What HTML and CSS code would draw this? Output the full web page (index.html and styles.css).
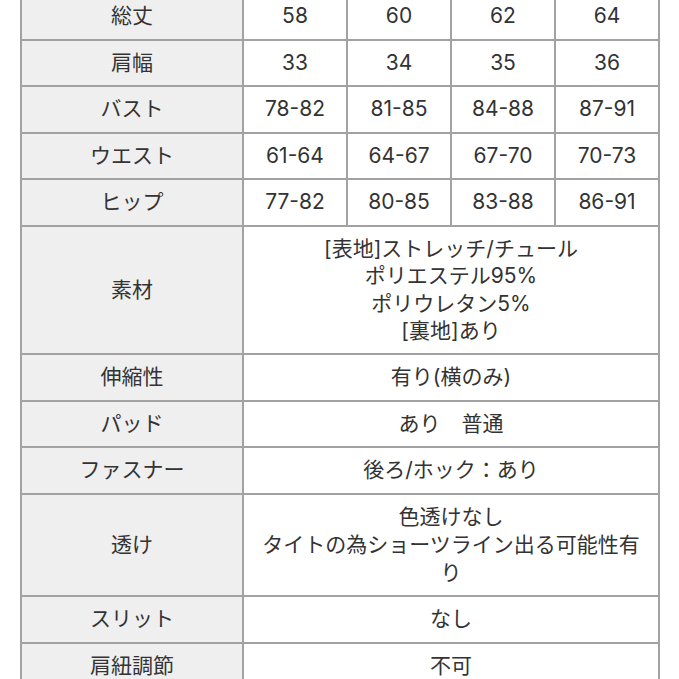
FILE: index.html
```html
<!DOCTYPE html>
<html lang="ja">
<head>
<meta charset="utf-8">
<link rel="stylesheet" href="styles.css">
</head>
<body>
<table class="size-table">
  <colgroup>
    <col class="c-head">
    <col class="c-val">
    <col class="c-val">
    <col class="c-val">
    <col class="c-val">
  </colgroup>
  <tbody>
    <tr><th>総丈</th><td>58</td><td>60</td><td>62</td><td>64</td></tr>
    <tr><th>肩幅</th><td>33</td><td>34</td><td>35</td><td>36</td></tr>
    <tr><th>バスト</th><td>78-82</td><td>81-85</td><td>84-88</td><td>87-91</td></tr>
    <tr><th>ウエスト</th><td>61-64</td><td>64-67</td><td>67-70</td><td>70-73</td></tr>
    <tr><th>ヒップ</th><td>77-82</td><td>80-85</td><td>83-88</td><td>86-91</td></tr>
    <tr><th>素材</th><td class="multi" colspan="4">[表地]ストレッチ/チュール<br>ポリエステル95%<br>ポリウレタン5%<br>[裏地]あり</td></tr>
    <tr><th>伸縮性</th><td colspan="4">有り(横のみ)</td></tr>
    <tr><th>パッド</th><td colspan="4">あり　普通</td></tr>
    <tr><th>ファスナー</th><td colspan="4">後ろ/ホック：あり</td></tr>
    <tr><th>透け</th><td colspan="4">色透けなし<br>タイトの為ショーツライン出る可能性有り</td></tr>
    <tr><th>スリット</th><td colspan="4">なし</td></tr>
    <tr><th>肩紐調節</th><td colspan="4">不可</td></tr>
  </tbody>
</table>
</body>
</html>
```
FILE: styles.css
```css
html, body {
  margin: 0;
  padding: 0;
  background: #ffffff;
}
body {
  font-family: "Inter", "Noto Sans CJK JP", sans-serif;
  color: #333333;
  overflow: hidden;
}
.size-table {
  border-collapse: collapse;
  table-layout: fixed;
  width: 638px;
  margin: -8px 0 0 20px;
}
.c-head { width: 222px; }
.c-val { width: 104px; }
.size-table th,
.size-table td {
  border: 2px solid #a2a2a2;
  padding: 8px 8px 8.5px;
  font-family: "Inter", "Noto Sans CJK JP", sans-serif;
  font-size: 21px;
  font-weight: 400;
  line-height: 28px;
  text-align: center;
  vertical-align: middle;
}
.size-table th {
  background: #efefef;
}
.size-table td {
  background: #ffffff;
}
.size-table td.multi {
  line-height: 27.5px;
}
```
